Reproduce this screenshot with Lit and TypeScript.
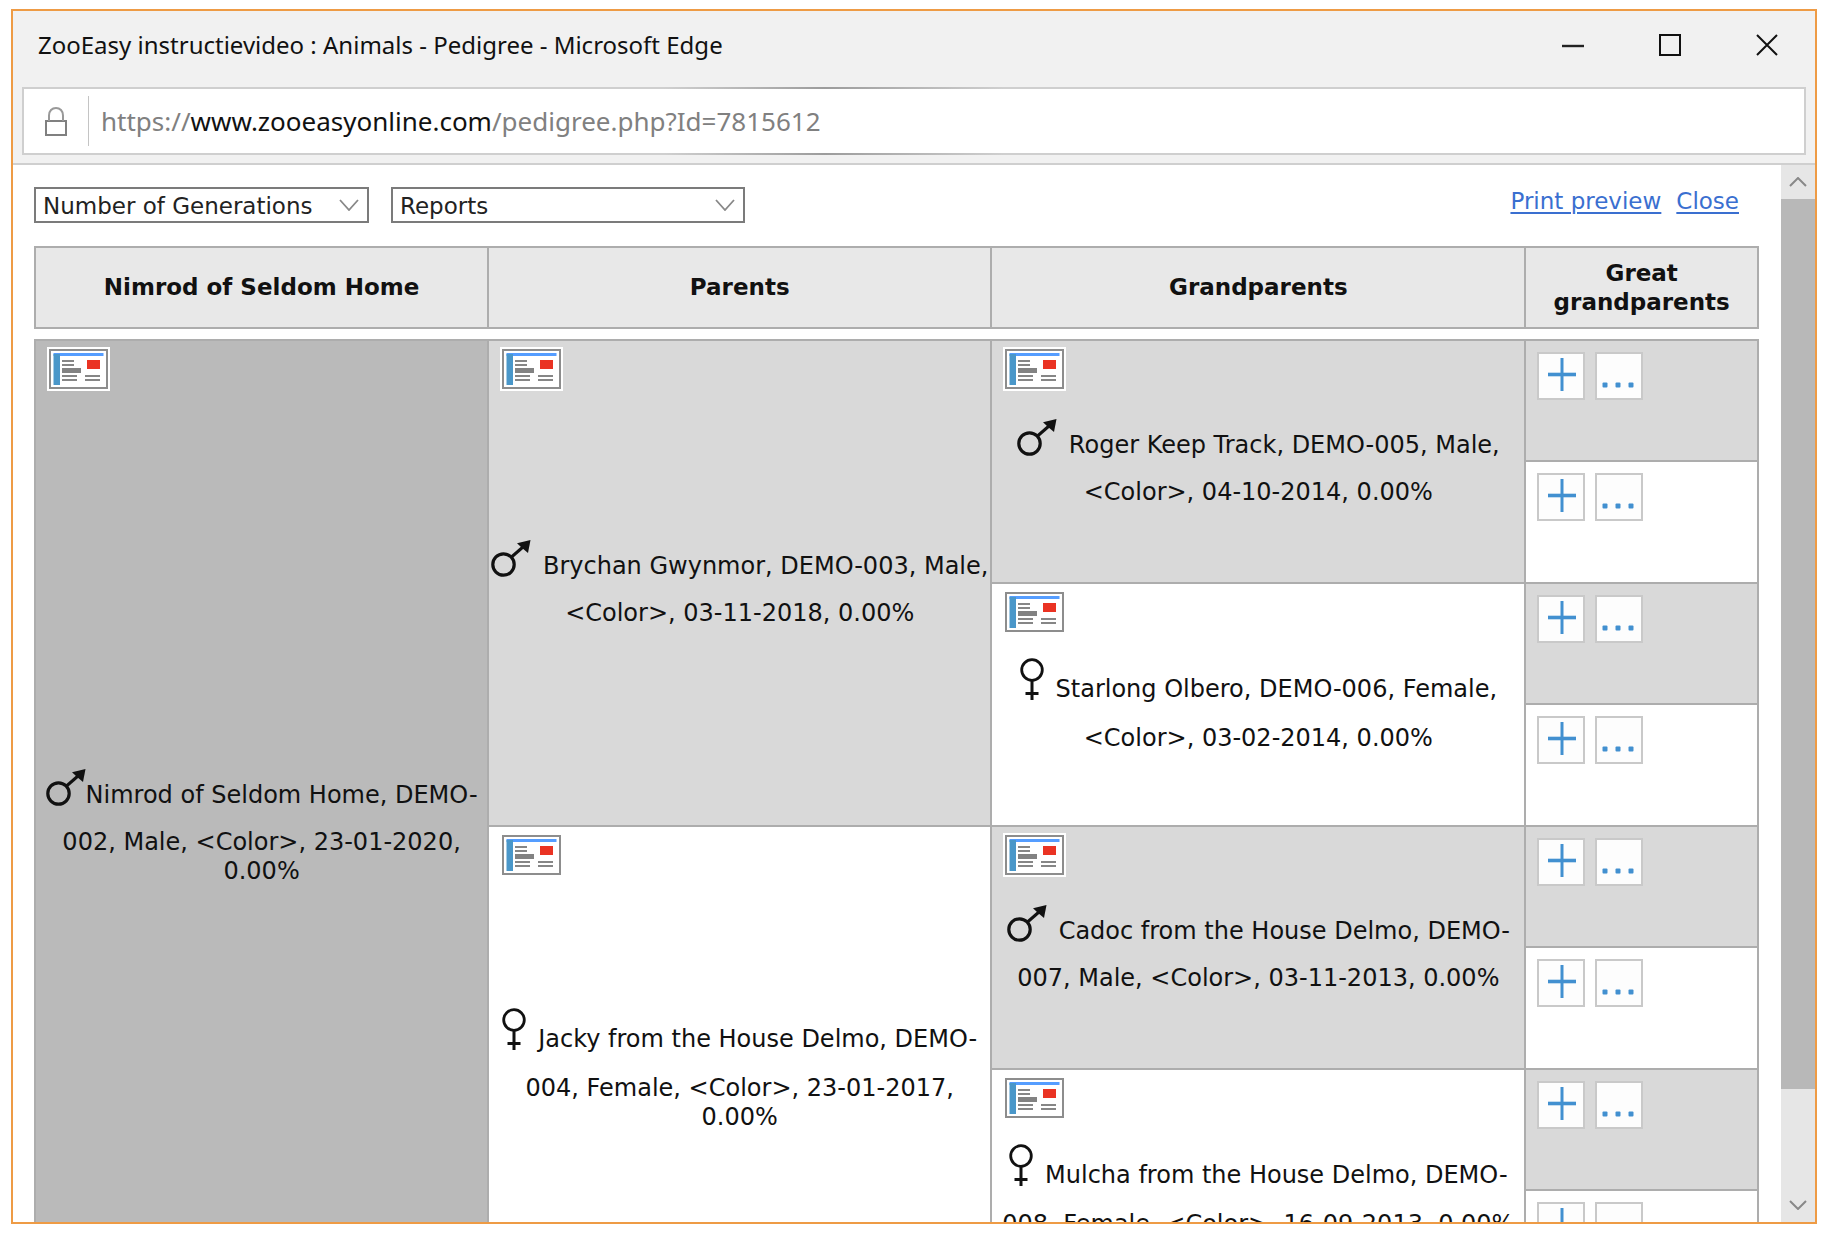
import { LitElement, html, css, svg, nothing } from "lit";
import { customElement, property } from "lit/decorators.js";

type Sex = "male" | "female";

interface Animal {
  sex: Sex;
  lines: string[];
  tone: string;
  tight?: boolean;
}

const root: Animal = {
  sex: "male",
  lines: ["Nimrod of Seldom Home, DEMO-", "002, Male, <Color>, 23-01-2020,", "0.00%"],
  tone: "self",
  tight: true,
};

const parents: Animal[] = [
  { sex: "male", lines: ["Brychan Gwynmor, DEMO-003, Male,", "<Color>, 03-11-2018, 0.00%"], tone: "shade" },
  { sex: "female", lines: ["Jacky from the House Delmo, DEMO-", "004, Female, <Color>, 23-01-2017,", "0.00%"], tone: "plain" },
];

const grandparents: Animal[] = [
  { sex: "male", lines: ["Roger Keep Track, DEMO-005, Male,", "<Color>, 04-10-2014, 0.00%"], tone: "shade" },
  { sex: "female", lines: ["Starlong Olbero, DEMO-006, Female,", "<Color>, 03-02-2014, 0.00%"], tone: "plain" },
  { sex: "male", lines: ["Cadoc from the House Delmo, DEMO-", "007, Male, <Color>, 03-11-2013, 0.00%"], tone: "shade" },
  { sex: "female", lines: ["Mulcha from the House Delmo, DEMO-", "008, Female, <Color>, 16-09-2013, 0.00%"], tone: "plain" },
];

const maleIcon = html`<svg class="sex" width="40" height="37" viewBox="0 0 40 37" role="img" aria-label="Male">
  <circle cx="12.5" cy="24.5" r="10.7" fill="none" stroke="#111" stroke-width="3.2" />
  <path d="M20.5 17 32 7" stroke="#111" stroke-width="3" />
  <path d="M39.500 0 26 3.200 30.500 7.500 37 13z" fill="#111" />
</svg>`;

const femaleIcon = html`<svg class="sex" width="24" height="42" viewBox="0 0 24 42" role="img" aria-label="Female">
  <circle cx="12" cy="12" r="10.3" fill="none" stroke="#111" stroke-width="2.8" />
  <path d="M12 22.5V42M5.5 35.5H18.5" fill="none" stroke="#111" stroke-width="3" />
</svg>`;

const chevron = html`<svg class="chevron" width="20" height="12" viewBox="0 0 20 12" aria-hidden="true">
  <path d="M1 1 10 11 19 1" fill="none" stroke="#888" stroke-width="1.8" />
</svg>`;

@customElement("animal-card")
export class AnimalCard extends LitElement {
  @property({ attribute: false }) animal!: Animal;

  static styles = css`
    :host { display: grid; height: 100%; box-sizing: border-box; }
    .open {
      grid-area: 1 / 1; place-self: start; display: block; padding: 0; border: 0;
      margin: 6px 0 0 11px; background: #fff; cursor: pointer;
    }
    .open svg { display: block; }
    .info {
      grid-area: 1 / 1; place-self: center; text-align: center;
      font-size: 24px; line-height: 29px; white-space: nowrap;
    }
    .first { display: flex; justify-content: center; align-items: flex-start; box-sizing: border-box; gap: 12px; }
    .tight { gap: 0; }
    .male { height: 61px; padding-top: 2px; }
    .female { height: 67px; padding-top: 1px; }
    .sex { flex: none; }
    .male .name { padding-top: 12px; }
    .female .name { padding-top: 17px; }
  `;

  render() {
    const { sex, lines, tight } = this.animal;
    const [first, ...rest] = lines;
    return html`
      <button class="open" aria-label="Open animal card">
        <svg width="63" height="44" viewBox="0 0 63 44" aria-hidden="true">
          <rect x="3" y="3" width="57" height="38" fill="#fff" stroke="#8d8d8d" stroke-width="2" />
          <rect x="6.5" y="6" width="50" height="3" fill="#559dff" />
          <rect x="6.5" y="7" width="6.5" height="31" fill="#4a97c9" />
          <path d="M15 14H27M15 18H27M15 29H30M15 33H30M38 29H53M38 33H53" stroke="#868686" stroke-width="2" />
          <rect x="15" y="21" width="19" height="5" fill="#828282" />
          <rect x="40" y="13" width="13" height="9" fill="#ea3323" />
        </svg>
      </button>
      <div class="info">
        <div class="first ${sex} ${tight ? "tight" : ""}">
          ${sex === "male" ? maleIcon : femaleIcon}<span class="name">${first}</span>
        </div>
        ${rest.map((line) => html`<div>${line}</div>`)}
      </div>
    `;
  }
}

@customElement("app-root")
export class AppRoot extends LitElement {
  static styles = css`
    :host {
      display: block; box-sizing: border-box; height: 100vh; padding: 9px 9px 14px 11px;
      background: #fff; color: #111; font-family: Verdana, "DejaVu Sans", sans-serif;
    }
    button { font: inherit; color: inherit; cursor: pointer; }
    .window {
      box-sizing: border-box; height: 100%; border: 2px solid #ee9b45; overflow: hidden;
      display: flex; flex-direction: column; background: #f1f1f1;
    }
    .titlebar {
      display: flex; align-items: center; height: 68px; padding-left: 25px; flex: none;
      font-family: "Segoe UI", "Noto Sans", sans-serif;
    }
    .title { flex: 1; margin: 0; font-size: 24px; line-height: 32px; font-weight: 400; white-space: nowrap; }
    .winbtn { width: 97px; height: 68px; padding: 0; border: 0; background: none; display: grid; place-items: center; }
    .address {
      flex: none; margin: 8px 9px; padding: 2px;
      background: linear-gradient(to right, #cfcfcf 36%, #9c9c9c 45%, #cfcfcf 55%);
    }
    .field { display: flex; align-items: center; height: 64px; background: #fff; padding-left: 21px; }
    .divider { width: 1px; height: 50px; background: #c4c4c4; margin: 0 12px 0 21px; }
    .url {
      font-family: "Segoe UI", "Noto Sans", sans-serif; font-size: 26px; line-height: 36px;
      color: #808080; white-space: nowrap;
    }
    .host { color: #111; }
    .view { flex: 1; min-height: 0; display: flex; border-top: 2px solid #cfcfcf; background: #fff; }
    .page { flex: 1; min-width: 0; overflow: hidden; padding: 22px 22px 0 21px; }
    .toolbar { display: flex; align-items: flex-start; gap: 22px; margin-bottom: 23px; }
    .pick { position: relative; display: flex; }
    .pick select {
      appearance: none; box-sizing: border-box; height: 36px; padding: 1px 40px 0 7px; margin: 0;
      border: 2px solid #7b7b7b; border-radius: 0; background: #fff; color: #222;
      font-family: inherit; font-size: 23px; line-height: 28px;
    }
    .generations { width: 335px; }
    .reports { width: 354px; }
    .chevron { position: absolute; right: 10px; top: 12px; pointer-events: none; }
    .links { margin-left: auto; display: flex; gap: 15px; padding-right: 20px; font-size: 23px; line-height: 29px; }
    .links a { color: #3a6fd0; text-decoration: underline; text-decoration-thickness: 2px; text-underline-offset: 3px; }
    .tree { width: 100%; border-collapse: collapse; table-layout: fixed; }
    .c1 { width: 26.3%; } .c2 { width: 29.2%; } .c3 { width: 31%; } .c4 { width: 13.5%; }
    th, td { border: 2px solid #adadad; padding: 0; }
    th { height: 79px; background: #e8e8e8; font-size: 23px; line-height: 29px; font-weight: 700; }
    .spacer td { height: 10px; border-left-style: hidden; border-right-style: hidden; }
    .row { height: 121px; }
    .row:nth-child(odd) { height: 122px; }
    .cell { height: 1px; }
    .self { background: #bababa; }
    .shade { background: #d9d9d9; }
    .plain { background: #fff; }
    .slot { vertical-align: top; }
    .actions { display: flex; gap: 10px; padding: 11px 0 0 11px; }
    .act { box-sizing: border-box; width: 48px; height: 48px; padding: 0; border: 2px solid #c9c9c9; background: #fdfdfd; }
    .act svg { display: block; }
    .scroll { flex: none; width: 34px; display: flex; flex-direction: column; background: #e6e6e6; }
    .arrow { height: 34px; padding: 0; border: 0; background: none; display: grid; place-items: center; flex: none; }
    .track { flex: 1; }
    .thumb { height: 90%; background: #b8b8b8; }
  `;

  private slotCell(i: number) {
    return html`<td class="slot ${i % 2 ? "plain" : "shade"}">
      <div class="actions">
        <button class="act" aria-label="Add animal">
          <svg width="44" height="44" viewBox="0 0 44 44" aria-hidden="true">
            <path d="M9 20.5H37" stroke="#4290d0" stroke-width="3.6" />
            <path d="M23 4V37" stroke="#4290d0" stroke-width="3" />
          </svg>
        </button>
        <button class="act" aria-label="Select animal">
          <svg width="44" height="44" viewBox="0 0 44 44" aria-hidden="true">
            ${[5, 18, 31].map((x) => svg`<rect x=${x + 0.5} y="28.500" width="5" height="5" rx="1" fill="#4290d0" />`)}
          </svg>
        </button>
      </div>
    </td>`;
  }

  private animalCell(a: Animal, span: number) {
    return html`<td class="cell ${a.tone}" rowspan=${span}><animal-card .animal=${a}></animal-card></td>`;
  }

  render() {
    return html`
      <main class="window">
        <header class="titlebar">
          <h1 class="title">ZooEasy instructievideo : Animals - Pedigree - Microsoft Edge</h1>
          <button class="winbtn" aria-label="Minimize">
            <svg width="22" height="22" viewBox="0 0 22 22"><path d="M0 12H22" stroke="#222" stroke-width="2.4" /></svg>
          </button>
          <button class="winbtn" aria-label="Maximize">
            <svg width="22" height="22" viewBox="0 0 22 22"><path d="M1 1H21V21H1z" fill="none" stroke="#111" stroke-width="2" /></svg>
          </button>
          <button class="winbtn" aria-label="Close window">
            <svg width="22" height="22" viewBox="0 0 22 22"><path d="M1 1 21 21M21 1 1 21" stroke="#111" stroke-width="2" /></svg>
          </button>
        </header>
        <div class="address">
          <div class="field">
            <svg width="22" height="29" viewBox="0 0 22 29" aria-label="Secure connection" role="img">
              <path d="M1 14H21V28H1z" fill="none" stroke="#808080" stroke-width="2" />
              <path d="M4 14V8.500C4 4 7 1 11 1S18 4 18 8.500V14" fill="none" stroke="#999" stroke-width="2" />
            </svg>
            <span class="divider"></span>
            <span class="url">https://<span class="host">www.zooeasyonline.com</span>/pedigree.php?Id=7815612</span>
          </div>
        </div>
        <div class="view">
          <section class="page">
            <div class="toolbar">
              <div class="pick">
                <select class="generations" aria-label="Number of Generations"><option>Number of Generations</option></select>
                ${chevron}
              </div>
              <div class="pick">
                <select class="reports" aria-label="Reports"><option>Reports</option></select>
                ${chevron}
              </div>
              <nav class="links"><a href="#print">Print preview</a><a href="#close">Close</a></nav>
            </div>
            <table class="tree">
              <colgroup><col class="c1" /><col class="c2" /><col class="c3" /><col class="c4" /></colgroup>
              <thead>
                <tr>
                  <th scope="col">Nimrod of Seldom Home</th>
                  <th scope="col">Parents</th>
                  <th scope="col">Grandparents</th>
                  <th scope="col">Great grandparents</th>
                </tr>
              </thead>
              <tbody>
                <tr class="spacer" aria-hidden="true"><td colspan="4"></td></tr>
                ${[0, 1, 2, 3, 4, 5, 6, 7].map(
                  (i) => html`<tr class="row">
                    ${i === 0 ? this.animalCell(root, 8) : nothing}
                    ${i % 4 === 0 ? this.animalCell(parents[i / 4], 4) : nothing}
                    ${i % 2 === 0 ? this.animalCell(grandparents[i / 2], 2) : nothing}
                    ${this.slotCell(i)}
                  </tr>`
                )}
              </tbody>
            </table>
          </section>
          <div class="scroll">
            <button class="arrow" aria-label="Scroll up">
              <svg width="18" height="10" viewBox="0 0 18 10"><path d="M1 9 9 1 17 9" fill="none" stroke="#888" stroke-width="2" /></svg>
            </button>
            <div class="track"><div class="thumb"></div></div>
            <button class="arrow" aria-label="Scroll down">
              <svg width="18" height="10" viewBox="0 0 18 10"><path d="M1 1 9 9 17 1" fill="none" stroke="#888" stroke-width="2" /></svg>
            </button>
          </div>
        </div>
      </main>
    `;
  }
}
